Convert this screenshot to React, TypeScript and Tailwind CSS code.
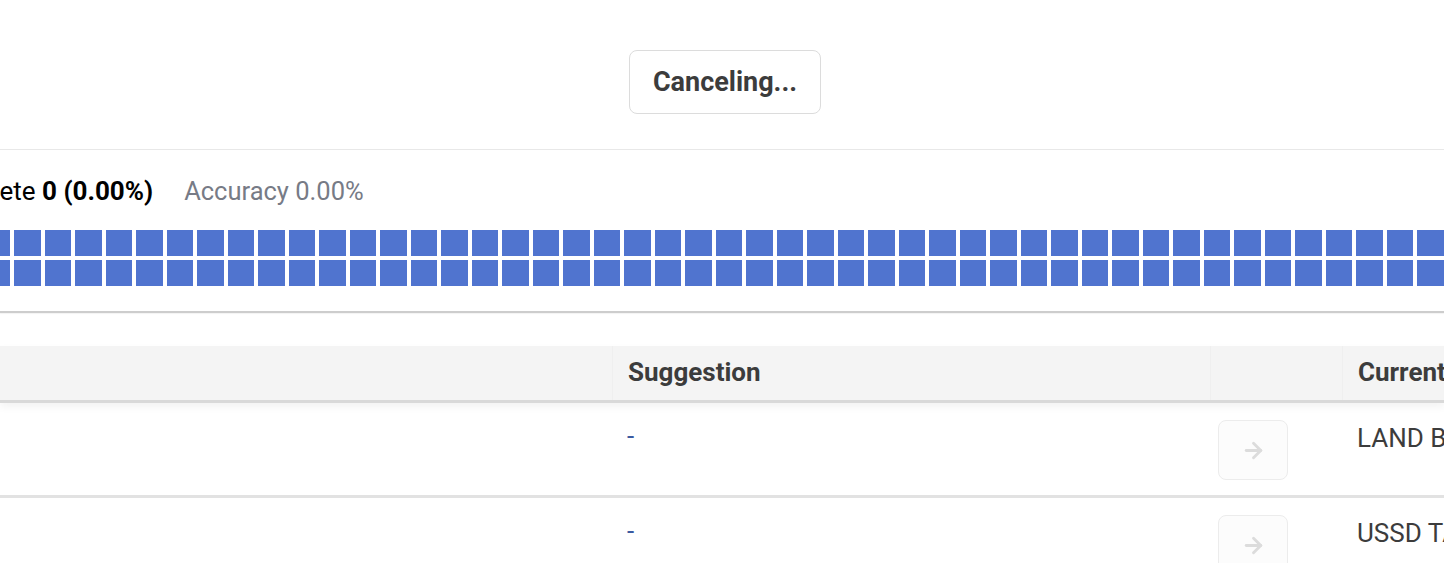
import React from 'react';
import { ArrowRight } from 'lucide-react';

const COLUMNS = 50;

const rows = [
  { id: 1, suggestion: '-', current: 'LAND BANK' },
  { id: 2, suggestion: '-', current: 'USSD TAX' },
];

export default function App() {
  return (
    <div className="w-[1444px] h-[563px] overflow-hidden bg-white text-[#3c3c3c] font-['Roboto',sans-serif]">
      {/* Cancel bar */}
      <div className="flex justify-center pt-[50px] pb-[35px] pl-[6px] border-b border-[#e8e8e8]">
        <button className="w-[192px] h-[64px] rounded-lg border border-[#dcdcdc] bg-white text-[27px] font-bold text-[#3c3c3c]">
          Canceling...
        </button>
      </div>

      {/* Progress */}
      <div className="pt-[25px]">
        <div className="flex items-center h-[32px] text-[26px] -ml-[76px] whitespace-nowrap">
          <span className="text-black">
            Complete <span className="font-bold">0 (0.00%)</span>
          </span>
          <span className="ml-[31px] text-[25.5px] text-[#777b86]">Accuracy 0.00%</span>
        </div>

        <div className="mt-[23px] -ml-[16.5px] flex flex-col gap-[4px]">
          {[0, 1].map((r) => (
            <div key={r} className="flex gap-[4px]">
              {Array.from({ length: COLUMNS }).map((_, i) => (
                <div key={i} className="w-[26.5px] h-[26px] shrink-0 bg-[#5074cf]" />
              ))}
            </div>
          ))}
        </div>
      </div>

      <div className="mt-[25px] h-[2px] bg-[#cdcdcd] shadow-[0_1px_1px_rgba(0,0,0,0.05)]" />

      {/* Table */}
      <div className="mt-[33px]">
        <div className="grid grid-cols-[612px_598px_132px_1fr] h-[57px] bg-[#f4f4f4] border-b-[3px] border-[#d9d9d9] shadow-[0_4px_8px_rgba(0,0,0,0.05)] text-[26px] font-bold">
          <div className="pb-[2px]" />
          <div className="px-[15px] pb-[2px] flex items-center border-l border-[#efefef]">Suggestion</div>
          <div className="border-l border-[#efefef]" />
          <div className="px-[15px] pb-[2px] flex items-center border-l border-[#efefef] whitespace-nowrap">Current Category</div>
        </div>

        {rows.map((row) => (
          <div
            key={row.id}
            className="grid grid-cols-[612px_598px_132px_1fr] h-[95px] border-b-[3px] border-[#e2e2e2] text-[26px]"
          >
            <div />
            <div className="px-[15px] pt-[14px] text-[#3b5aa0]">{row.suggestion}</div>
            <div className="pl-[8px] pt-[17px]">
              <button className="w-[70px] h-[60px] rounded-lg border border-[#ececec] bg-[#fcfcfc] flex items-center justify-center">
                <ArrowRight size={25} strokeWidth={2.75} className="text-[#dcdcdc]" />
              </button>
            </div>
            <div className="px-[15px] pt-[16px] whitespace-nowrap">{row.current}</div>
          </div>
        ))}
      </div>
    </div>
  );
}
